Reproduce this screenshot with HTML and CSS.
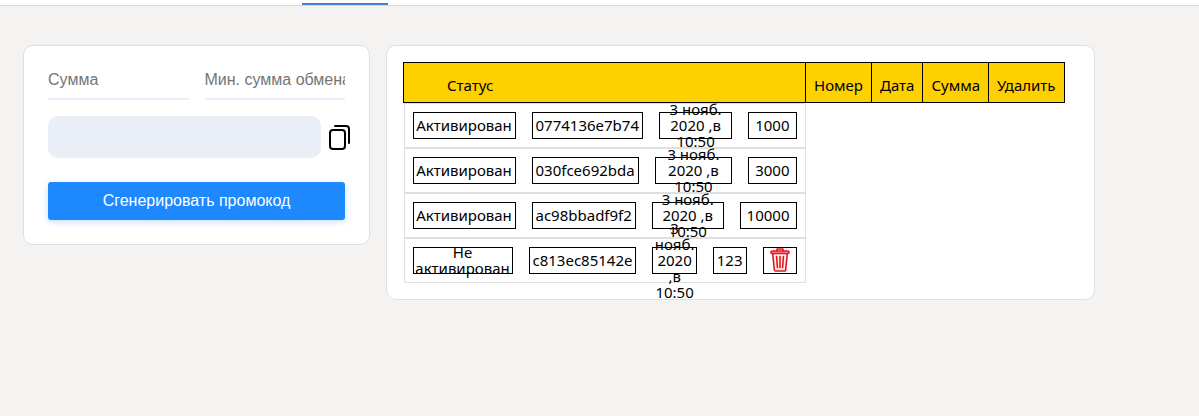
FILE: index.html
```
<!DOCTYPE html>
<html lang="ru">
<head>
  <meta charset="UTF-8">
  <meta name="viewport" content="width=device-width, initial-scale=1.0">
  <title>Промокоды</title>
  <link rel="stylesheet" href="styles.css">
</head>
<body>
  <header class="topbar">
    <div class="active-tab"></div>
  </header>

  <main class="container">
    <form class="card promo-form">
      <div class="fields">
        <input type="text" placeholder="Сумма" aria-label="Сумма">
        <input type="text" placeholder="Мин. сумма обмена" aria-label="Мин. сумма обмена">
      </div>
      <div class="result">
        <input type="text" class="promo-code" aria-label="Промокод" readonly>
        <button type="button" class="icon-button" aria-label="Скопировать">
          <svg width="22" height="26" viewBox="0 0 22 26" fill="none" stroke="#000" stroke-width="2" stroke-linecap="round">
            <rect x="1" y="6" width="15" height="19" rx="3"/>
            <path d="M6 2h11a3 3 0 0 1 3 3v14"/>
          </svg>
        </button>
      </div>
      <button type="button" class="generate-button">Сгенерировать промокод</button>
    </form>

    <section class="card promo-list">
      <table>
        <thead>
          <tr>
            <th class="status-head">Статус</th>
            <th>Номер</th>
            <th>Дата</th>
            <th>Сумма</th>
            <th>Удалить</th>
          </tr>
        </thead>
        <tbody>
          <tr>
            <td class="status">Активирован</td>
            <td>0774136e7b74</td>
            <td class="date">3 нояб. 2020 ,в 10:50</td>
            <td class="amount">1000</td>
          </tr>
          <tr>
            <td class="status">Активирован</td>
            <td>030fce692bda</td>
            <td class="date">3 нояб. 2020 ,в 10:50</td>
            <td class="amount">3000</td>
          </tr>
          <tr>
            <td class="status">Активирован</td>
            <td>ac98bbadf9f2</td>
            <td class="date">3 нояб. 2020 ,в 10:50</td>
            <td class="amount">10000</td>
          </tr>
          <tr>
            <td class="status inactive">Не активирован</td>
            <td>c813ec85142e</td>
            <td class="date">3 нояб. 2020 ,в 10:50</td>
            <td>123</td>
            <td class="delete">
              <button type="button" class="icon-button" aria-label="Удалить">
                <svg width="20" height="24" viewBox="0 0 20 24" fill="none" stroke="#e5161d" stroke-width="1.6" stroke-linecap="round" stroke-linejoin="round">
                  <path d="M2.700 5.500l1.600 16a1.500 1.500 0 0 0 1.500 1.500h8.400a1.500 1.500 0 0 0 1.500-1.500l1.600-16" fill="#fdeeee"/>
                  <rect x="1" y="3" width="18" height="2.500" rx="1" fill="#f79a9d"/>
                  <path d="M7 3V1h6v2"/>
                  <path d="M6.600 8.500l.8 11M10 8.500v11M13.400 8.500l-.8 11"/>
                </svg>
              </button>
            </td>
          </tr>
        </tbody>
      </table>
    </section>
  </main>
</body>
</html>
```
FILE: styles.css
```
* {
  margin: 0;
  padding: 0;
  box-sizing: border-box;
}

body {
  font-family: 'Noto Sans', sans-serif;
  font-size: 15px;
  background-color: #f4f3f2;
  color: #000;
}

input,
button {
  font-family: 'Liberation Sans', Arial, sans-serif;
  font-size: 16px;
  border: none;
}

/* Top bar */
.topbar {
  height: 6px;
  padding: 3px 0 0 302px;
  background-color: #fff;
  border-bottom: 1px solid #d8d8d8;
}

.active-tab {
  width: 86px;
  height: 2px;
  background-color: #3f83c9;
}

.container {
  display: flex;
  align-items: flex-start;
  gap: 16px;
  max-width: 1119px;
  padding: 39px 24px 24px 23px;
}

.card {
  background-color: #fff;
  border: 1px solid #dfdfdf;
  border-radius: 10px;
}

/* Generator form */
.promo-form {
  flex: 0 0 347px;
  min-width: 0;
  padding: 14px 24px 24px;
}

.fields {
  display: flex;
  gap: 16px;
  margin-bottom: 16px;
}

.fields input {
  flex: 1;
  min-width: 0;
  height: 40px;
  padding-top: 2px;
  border-bottom: 2px solid #e8f1fb;
}

.fields input::placeholder {
  color: #757575;
}

.result {
  display: flex;
  align-items: center;
  gap: 8px;
  margin-bottom: 24px;
}

.promo-code {
  flex: 0 0 273px;
  min-width: 0;
  height: 42px;
  padding: 0 10px;
  background-color: #e9eef7;
  border-radius: 10px;
}

.icon-button {
  display: flex;
  background: none;
  cursor: pointer;
}

.generate-button {
  display: block;
  width: 100%;
  height: 38px;
  background-color: #1e88ff;
  color: #fff;
  border-radius: 3px;
  box-shadow: 0 2px 6px rgba(30, 136, 255, 0.25);
  cursor: pointer;
}

/* Promo codes */
.promo-list {
  flex: 1;
  min-width: 0;
  padding: 16px;
}

table {
  border-collapse: collapse;
}

th {
  height: 40px;
  padding: 5px 8px 0;
  background-color: #ffd000;
  border: 1px solid #000;
  font-weight: normal;
  text-align: left;
}

.status-head {
  width: 402px;
  padding-left: 43px;
}

tbody tr {
  display: flex;
  gap: 16px;
  width: 402px;
  height: 45px;
  padding: 8px;
  border: 1px solid #dfdfdf;
}

td {
  display: flex;
  align-items: center;
  justify-content: center;
  flex: none;
  height: 27px;
  padding: 0 3px 2px;
  border: 1px solid #000;
  line-height: 16px;
  text-align: center;
}

.status {
  width: 103px;
}

.inactive {
  width: 100px;
}

.date {
  flex: 1;
  min-width: 0;
}

.amount {
  padding: 0 6px 2px;
}

.delete {
  width: 34px;
}
```
